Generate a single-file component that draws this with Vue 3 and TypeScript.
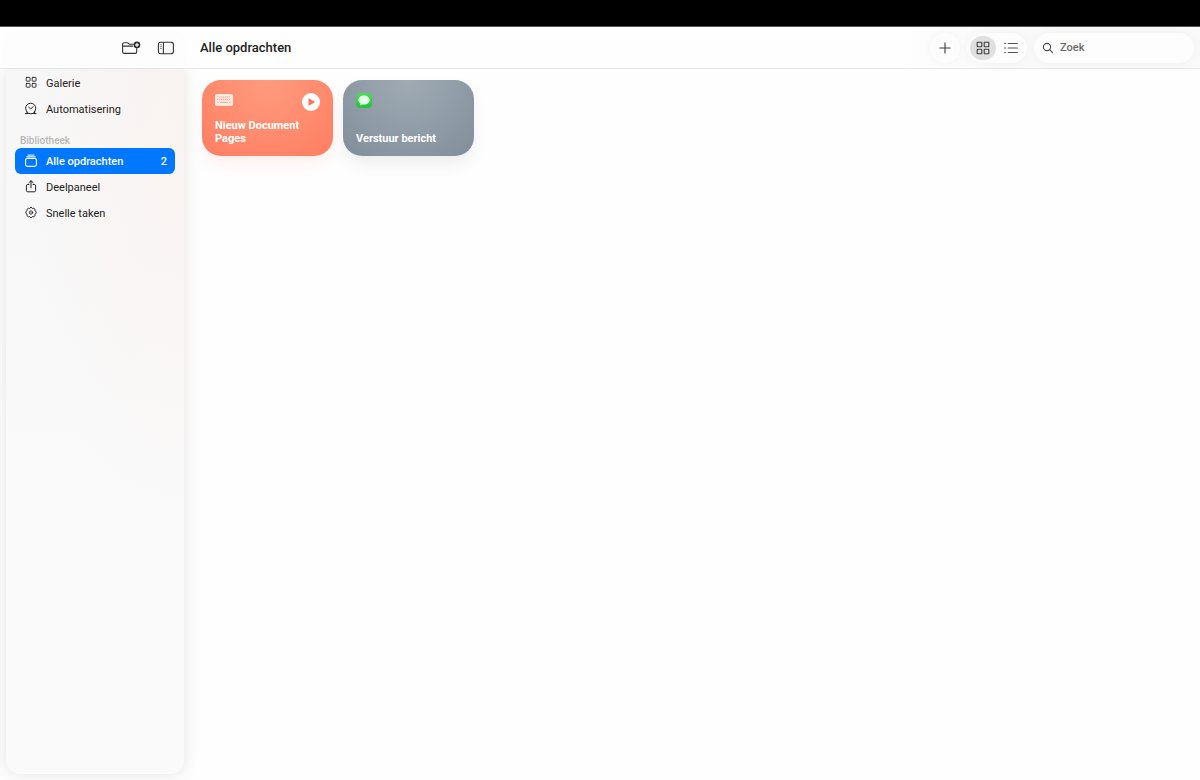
<script setup lang="ts">
import { ref } from 'vue'

interface NavItem {
  id: string
  label: string
  count?: number
}

const general: NavItem[] = [
  { id: 'gallery', label: 'Galerie' },
  { id: 'automation', label: 'Automatisering' },
]
const library: NavItem[] = [
  { id: 'all', label: 'Alle opdrachten', count: 2 },
  { id: 'share', label: 'Deelpaneel' },
  { id: 'quick', label: 'Snelle taken' },
]
const groups = [
  { title: '', items: general },
  { title: 'Bibliotheek', items: library },
]

const selected = ref('all')
const view = ref<'grid' | 'list'>('grid')
const query = ref('')
</script>

<template>
  <div class="app">
    <div class="menubar"></div>
    <header class="toolbar">
      <div class="side-tools">
        <button type="button" class="tool" aria-label="Nieuwe map">
          <svg width="20" height="16" viewBox="0 0 20 16" fill="none" stroke="#333" stroke-width="1.1" stroke-linejoin="round" stroke-linecap="round">
            <path d="M12.5 4.2H8.2L6.8 2.8H3.1Q1.6 2.8 1.6 4.3V11.7Q1.6 13.4 3.3 13.4H14Q15.7 13.4 15.7 11.7V8.6M1.7 6.1H11.8" />
            <circle cx="16" cy="4.9" r="3.3" fill="#2a2a2a" stroke="none" />
            <path d="M16 3.4V6.4M14.5 4.9H17.5" stroke="#fff" stroke-width="1.2" />
          </svg>
        </button>
        <button type="button" class="tool" aria-label="Navigatiekolom">
          <svg width="18" height="16" viewBox="0 0 18 16" fill="none" stroke="#333" stroke-width="1.1" stroke-linecap="round">
            <rect x="1.4" y="2.3" width="15" height="11.4" rx="2.2" />
            <path d="M6.4 2.5V13.5" />
            <path d="M3.4 4.8H4.5M3.4 6.7H4.5M3.4 8.6H4.5" stroke="#777" stroke-width="0.9" />
          </svg>
        </button>
      </div>
      <h1>Alle opdrachten</h1>
      <button type="button" class="add" aria-label="Nieuwe opdracht">
        <svg width="12" height="12" viewBox="0 0 12 12" fill="none" stroke="#3c3c3c" stroke-width="1.1" stroke-linecap="round">
          <path d="M6 .9V11.1M.9 6H11.1" />
        </svg>
      </button>
      <div class="segments">
        <button type="button" :class="{ on: view === 'grid' }" aria-label="Raster" @click="view = 'grid'">
          <svg width="14" height="14" viewBox="0 0 14 14" fill="none" stroke="#3c3c3c" stroke-width="1.1">
            <rect x="1.2" y="1.2" width="4.6" height="4.6" rx="0.5" />
            <rect x="8.2" y="1.2" width="4.6" height="4.6" rx="0.5" />
            <rect x="1.2" y="8.2" width="4.6" height="4.6" rx="0.5" />
            <rect x="8.2" y="8.2" width="4.6" height="4.6" rx="0.5" />
          </svg>
        </button>
        <button type="button" :class="{ on: view === 'list' }" aria-label="Lijst" @click="view = 'list'">
          <svg width="14" height="14" viewBox="0 0 14 14" fill="none" stroke="#555" stroke-width="1.1" stroke-linecap="round">
            <path d="M4.2 2.5H13.4M4.2 7H13.4M4.2 11.5H13.4" />
            <path d="M.9 2.5H1.1M.9 7H1.1M.9 11.5H1.1" stroke-width="1.4" />
          </svg>
        </button>
      </div>
      <label class="search">
        <svg width="12" height="12" viewBox="0 0 12 12" fill="none" stroke="#4a4a4a" stroke-width="1.1" stroke-linecap="round">
          <circle cx="5" cy="5" r="3.6" />
          <path d="M7.7 7.7L10.6 10.6" />
        </svg>
        <input v-model="query" type="text" placeholder="Zoek" aria-label="Zoek" />
      </label>
    </header>

    <div class="body">
      <nav class="sidebar">
        <div v-for="group in groups" :key="group.title" class="group">
          <h2 v-if="group.title">{{ group.title }}</h2>
          <button
            v-for="item in group.items"
            :key="item.id"
            type="button"
            class="row"
            :class="{ active: selected === item.id }"
            @click="selected = item.id"
          >
            <svg width="14" height="14" viewBox="0 0 14 14" fill="none" stroke="currentColor" stroke-width="1" stroke-linecap="round" stroke-linejoin="round">
              <template v-if="item.id === 'gallery'">
                <g stroke-width="0.9">
                  <rect x="2.2" y="1.4" width="3.8" height="3.8" rx="0.5" />
                  <rect x="8.2" y="1.4" width="3.8" height="3.8" rx="0.5" />
                  <rect x="2.2" y="7.4" width="3.8" height="3.8" rx="0.5" />
                  <rect x="8.2" y="7.4" width="3.8" height="3.8" rx="0.5" />
                </g>
              </template>
              <template v-else-if="item.id === 'automation'">
                <path d="M3.4 10.2A5.1 5.1 0 1 1 10 10.2M1.3 11.6H3.6L2.6 9.8M12.1 11.6H9.8L10.8 9.8M3.6 11.3Q6.7 12.4 9.8 11.3" />
                <path d="M4.7 5.1L6.7 6.9L9.2 4.6" />
              </template>
              <template v-else-if="item.id === 'all'">
                <rect x="1.6" y="4.4" width="10.8" height="8" rx="1.8" stroke-width="1.1" />
                <path d="M2.7 2.8H11.3M4 1.1H10" />
              </template>
              <template v-else-if="item.id === 'share'">
                <path d="M4.9 4.5H3.7Q2.4 4.5 2.4 5.8V10.5Q2.4 11.8 3.7 11.8H10.3Q11.6 11.8 11.6 10.5V5.8Q11.6 4.5 10.3 4.5H9.1M7 7.9V.9M4.9 2.7L7 .7L9.1 2.7" />
              </template>
              <template v-else>
                <path d="M7 1.4Q8 1.4 8.4 2.5Q9.7 1.9 10.5 2.7Q11.2 3.5 10.8 4.6Q12.2 5 12.2 6.5Q12.2 7.9 10.8 8.4Q11.3 9.6 10.5 10.3Q9.7 11.1 8.4 10.5Q8 11.7 7 11.7Q6 11.7 5.6 10.5Q4.3 11.1 3.5 10.3Q2.7 9.6 3.2 8.4Q1.8 7.9 1.8 6.5Q1.8 5 3.2 4.6Q2.8 3.5 3.5 2.7Q4.3 1.9 5.6 2.5Q6 1.4 7 1.4Z" />
                <circle cx="7" cy="6.5" r="1.7" stroke-width="0.9" />
                <circle cx="7" cy="6.5" r="0.5" fill="currentColor" stroke="none" />
              </template>
            </svg>
            <span class="label">{{ item.label }}</span>
            <span v-if="item.count" class="count">{{ item.count }}</span>
          </button>
        </div>
      </nav>

      <main class="grid">
        <article class="card coral">
          <div class="card-top">
            <svg width="18" height="14" viewBox="0 0 18 14">
              <rect y="1" width="18" height="12" rx="2" fill="#ffece3" />
              <path d="M2.2 4H15.8M2.2 6.5H15.8" stroke="#ff9c86" stroke-width="1.1" stroke-dasharray="1.2 .7" />
              <path d="M2.2 9.3H3.7M5 9.3H13M14.3 9.3H15.8" stroke="#ff9c86" stroke-width="1" />
            </svg>
            <button type="button" class="play" aria-label="Voer uit">
              <svg width="18" height="18" viewBox="0 0 18 18">
                <circle cx="9" cy="9" r="9" fill="#fff" />
                <path d="M6.5 5.9V12.1Q6.5 12.9 7.2 12.5L12.4 9.5Q13.1 9 12.4 8.5L7.2 5.5Q6.5 5.1 6.5 5.9Z" fill="#f9745a" />
              </svg>
            </button>
          </div>
          <h3>Nieuw Document Pages</h3>
        </article>
        <article class="card slate">
          <div class="card-top">
            <svg width="16" height="16" viewBox="0 0 16 16">
              <defs>
                <linearGradient id="msg" x1="0" y1="0" x2="0" y2="1">
                  <stop offset="0" stop-color="#4fda5c" />
                  <stop offset="1" stop-color="#1fc437" />
                </linearGradient>
              </defs>
              <rect width="16" height="15" rx="4" fill="url(#msg)" />
              <path d="M8 2.5C4.8 2.5 2.4 4.4 2.4 6.9C2.4 8.4 3.3 9.7 4.7 10.5Q4.5 11.5 3.8 12.2Q5.4 12.1 6.4 11.2Q7.2 11.4 8 11.4C11.2 11.4 13.6 9.4 13.6 6.9C13.6 4.4 11.2 2.5 8 2.5Z" fill="#e6ffe8" />
            </svg>
          </div>
          <h3>Verstuur bericht</h3>
        </article>
      </main>
    </div>
  </div>
</template>

<style>
body {
  margin: 0;
  background: #fefefe;
}
</style>

<style scoped>
.app {
  display: flex;
  flex-direction: column;
  min-height: 100vh;
  font-family: Roboto, "Liberation Sans", sans-serif;
  font-size: 11px;
  color: #222;
  overflow: hidden;
}
button {
  padding: 0;
  border: 0;
  background: none;
  font: inherit;
  color: inherit;
}
svg {
  display: block;
  flex: none;
}
.menubar {
  height: 26px;
  background: #000;
  border-bottom: 1px solid #555;
}
.toolbar {
  position: relative;
  z-index: 1;
  display: flex;
  align-items: center;
  height: 41px;
  padding-right: 6px;
  background: linear-gradient(90deg, #fefefe 75%, #f9f9f9 84%);
  border-bottom: 1px solid #e6e6e6;
}
.side-tools {
  display: flex;
  align-items: center;
  justify-content: flex-end;
  align-self: flex-end;
  gap: 16px;
  box-sizing: border-box;
  width: 178px;
  height: 35px;
  margin: 0 16px 0 6px;
  padding: 0 9px 6px 0;
  border-radius: 12px 12px 0 0;
  background: #fdfdfd;
  box-shadow: 0 0 8px rgba(0, 0, 0, 0.02);
}
h1 {
  flex: 1;
  margin: 0;
  font-size: 13px;
  line-height: 16px;
  font-weight: 500;
}
.add,
.segments,
.search {
  border-radius: 15px;
  background: #fdfdfd;
  box-shadow: 0 0 8px rgba(0, 0, 0, 0.04);
}
.add {
  display: grid;
  place-items: center;
  width: 30px;
  height: 30px;
  margin-right: 7px;
}
.segments {
  display: flex;
  align-items: center;
  gap: 2px;
  box-sizing: border-box;
  height: 30px;
  padding: 0 3px;
  margin-right: 7px;
}
.segments button {
  display: grid;
  place-items: center;
  width: 26px;
  height: 24px;
  border-radius: 12px;
}
.segments .on {
  background: #e0e0e0;
}
.search {
  display: flex;
  align-items: center;
  gap: 6px;
  box-sizing: border-box;
  width: 160px;
  height: 30px;
  padding: 0 8px;
}
.search input {
  flex: 1;
  min-width: 0;
  padding: 0;
  border: 0;
  outline: 0;
  background: none;
  font: inherit;
  font-weight: 500;
  color: #333;
}
.search input::placeholder {
  color: #6a6a6a;
  opacity: 1;
}
.body {
  flex: 1;
  display: flex;
}
.sidebar {
  box-sizing: border-box;
  flex: none;
  width: 178px;
  margin: 0 18px 6px 6px;
  padding: 1px 9px;
  border-radius: 0 0 14px 14px;
  background:
    radial-gradient(ellipse 160px 400px at 100% 60px, rgba(255, 232, 226, 0.3), rgba(255, 240, 236, 0) 100%),
    linear-gradient(#f7f7f7, #fafafa 60%);
  box-shadow: 0 0 16px rgba(0, 0, 0, 0.11);
}
.row {
  display: flex;
  align-items: center;
  gap: 8px;
  box-sizing: border-box;
  width: 100%;
  height: 26px;
  padding: 0 8px 0 9px;
  border-radius: 6px;
  text-align: left;
}
.label {
  flex: 1;
}
.row.active {
  background: #0077ff;
  color: #fff;
  font-weight: 500;
}
h2 {
  margin: 12px 0 0 5px;
  font-size: 10px;
  line-height: 14px;
  font-weight: 500;
  color: #b8b6b6;
}
.grid {
  flex: 1;
  display: grid;
  grid-template-columns: repeat(auto-fill, 131px);
  align-content: start;
  gap: 10px;
  padding: 11px 12px 12px 0;
}
.card {
  display: flex;
  flex-direction: column;
  justify-content: space-between;
  box-sizing: border-box;
  min-height: 76px;
  padding: 13px 13px 11px;
  border-radius: 19px;
}
.card-top {
  display: flex;
  justify-content: space-between;
  align-items: flex-start;
}
.coral {
  background: radial-gradient(circle at 50% 0%, #ff9b7e, #ff8164 90%);
  box-shadow: 0 8px 16px -2px rgba(255, 120, 90, 0.12);
}
.slate {
  background: radial-gradient(circle at 50% 0%, #a0abb4, #84919d 90%);
  box-shadow: 0 8px 16px -2px rgba(90, 100, 110, 0.12);
}
h3 {
  margin: 0;
  font-size: 11px;
  line-height: 13px;
  font-weight: 700;
  color: #fff;
}
</style>
